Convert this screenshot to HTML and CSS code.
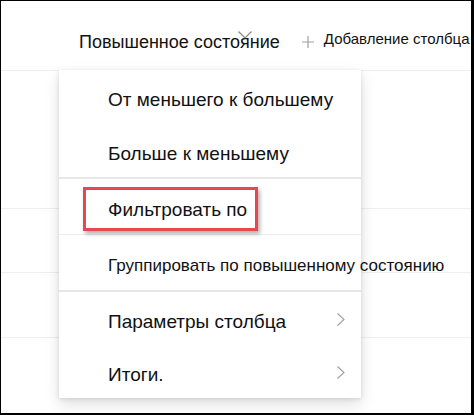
FILE: index.html
```html
<!DOCTYPE html>
<html lang="ru">
<head>
    <meta charset="UTF-8">
    <meta name="viewport" content="width=device-width, initial-scale=1.0">
    <title>Меню столбца</title>
    <link rel="stylesheet" href="styles.css">
</head>
<body>
    <div class="frame">
        <div class="header">
            <span class="col-title">Повышенное состояние</span>
            <svg class="col-chevron" width="14" height="8" viewBox="0 0 14 8">
                <path d="M0.5 0.5 L7 7 L13.5 0.5" fill="none" stroke="#8a8886" stroke-width="1.2"/>
            </svg>
            <svg class="add-icon" width="12" height="12" viewBox="0 0 12 12">
                <path d="M6 0 V12 M0 6 H12" fill="none" stroke="#a19f9d" stroke-width="1.2"/>
            </svg>
            <span class="add-col">Добавление столбца</span>
        </div>
        <div class="row row-tall"></div>
        <div class="row row-mid"></div>
        <div class="row row-mid2"></div>
        <div class="row"></div>

        <!-- Контекстное меню столбца -->
        <div class="menu">
            <div class="item item-a">От меньшего к большему</div>
            <div class="item item-b">Больше к меньшему</div>
            <div class="sep"></div>
            <div class="item item-c">
                Фильтровать по
                <div class="highlight"></div>
            </div>
            <div class="sep thin"></div>
            <div class="item item-c small">Группировать по повышенному состоянию</div>
            <div class="sep"></div>
            <div class="item item-d">
                Параметры столбца
                <svg class="chev" width="8" height="13" viewBox="0 0 8 13">
                    <path d="M0.5 0.5 L7 6.5 L0.5 12.5" fill="none" stroke="#a19f9d" stroke-width="1.1"/>
                </svg>
            </div>
            <div class="item item-d">
                Итоги.
                <svg class="chev" width="8" height="13" viewBox="0 0 8 13">
                    <path d="M0.5 0.5 L7 6.5 L0.5 12.5" fill="none" stroke="#a19f9d" stroke-width="1.1"/>
                </svg>
            </div>
        </div>
    </div>
</body>
</html>
```

FILE: styles.css
```css
/* Marco de la captura */
body {
    margin: 0;
    font-family: "Liberation Sans", Arial, sans-serif;
    color: #111;
    background-color: #fff;
}

.frame {
    position: relative;
    width: 474px;
    height: 415px;
    box-sizing: border-box;
    border-style: solid;
    border-color: #000;
    border-width: 1px 3px 2px 1px;
    overflow: hidden;
}

/* Cabecera de columnas */
.header {
    display: flex;
    align-items: center;
    height: 69px;
    padding-left: 78px;
    border-bottom: 1px solid #ececec;
    box-sizing: content-box;
    white-space: nowrap;
}

.header > * {
    flex-shrink: 0;
}

.col-title {
    font-size: 18px;
    margin-top: 14px;
}

.col-chevron {
    margin-left: -42px;
    margin-top: -1px;
}

.add-icon {
    margin-left: 50px;
    margin-top: 13px;
}

.add-col {
    font-size: 15px;
    margin-left: 10px;
    margin-top: 5px;
}

/* Filas */
.row {
    border-bottom: 1px solid #efefef;
    height: 80px;
}

.row-tall {
    height: 137px;
}

.row-mid {
    height: 63px;
}

.row-mid2 {
    height: 64px;
}

/* Menú */
.menu {
    position: absolute;
    left: 58px;
    top: 69px;
    width: 302px;
    background-color: #fff;
    box-shadow: 0 6px 14px rgba(0, 0, 0, 0.13), 0 1px 4px rgba(0, 0, 0, 0.11);
}

.item {
    position: relative;
    display: flex;
    align-items: center;
    box-sizing: border-box;
    padding-left: 49px;
    padding-top: 6px;
    font-size: 19px;
    white-space: nowrap;
}

.item-a {
    height: 54px;
}

.item-b {
    height: 53px;
}

.item-c {
    height: 55px;
}

.item-d {
    height: 53px;
}

.small {
    font-size: 17px;
}

.sep {
    height: 2px;
    background-color: #e6e6e6;
}

.sep.thin {
    height: 1px;
    background-color: #ececec;
}

.chev {
    position: absolute;
    right: 16px;
    top: 21px;
}

/* Recuadro rojo de resaltado */
.highlight {
    position: absolute;
    left: 24px;
    top: 8px;
    width: 175px;
    height: 44px;
    box-sizing: border-box;
    border: 3px solid #e8474f;
    box-shadow: 2px 3px 4px rgba(0, 0, 0, 0.3);
}
```
